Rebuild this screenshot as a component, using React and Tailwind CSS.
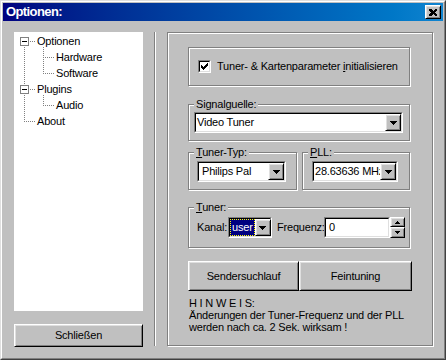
import React from "react";

const raised =
  "border border-t-white border-l-white border-r-black border-b-black shadow-[inset_1px_1px_0_#dfdfdf,inset_-1px_-1px_0_#808080]";
const etched = "border border-[#808080] shadow-[inset_1px_1px_0_#fff,1px_1px_0_#fff]";

function dotsH(x1, x2, y) {
  const out = [];
  for (let x = x1; x <= x2; x += 2) out.push(<rect key={`h${x}-${y}`} x={x} y={y} width="1" height="1" />);
  return out;
}
function dotsV(x, y1, y2) {
  const out = [];
  for (let y = y1; y <= y2; y += 2) out.push(<rect key={`v${x}-${y}`} x={x} y={y} width="1" height="1" />);
  return out;
}

function TreeLines() {
  return (
    <svg className="absolute left-0 top-0" width="129" height="120" shapeRendering="crispEdges">
      <g fill="#808080">
        {dotsH(16, 21, 9)}
        {dotsV(10, 15, 51)}
        {dotsV(10, 63, 89)}
        {dotsH(12, 21, 89)}
        {dotsH(16, 21, 57)}
        {dotsV(29, 15, 41)}
        {dotsH(31, 39, 25)}
        {dotsH(31, 39, 41)}
        {dotsV(29, 63, 73)}
        {dotsH(31, 39, 73)}
      </g>
      {[5, 53].map((y) => (
        <g key={y}>
          <rect x="6.5" y={y + 0.5} width="8" height="8" fill="#fff" stroke="#808080" />
          <rect x="8" y={y + 4} width="5" height="1" fill="#000" />
        </g>
      ))}
    </svg>
  );
}

function Arrow() {
  return (
    <svg width="7" height="4" shapeRendering="crispEdges">
      <polygon points="0,0 7,0 3.5,4" fill="#000" />
    </svg>
  );
}

function DropBtn() {
  return (
    <div className={`flex h-[17px] w-[16px] shrink-0 items-center justify-center bg-[#c0c0c0] ${raised}`}>
      <Arrow />
    </div>
  );
}

function Sunken({ className, children }) {
  return (
    <div className={`flex h-[21px] border border-t-[#808080] border-l-[#808080] border-r-white border-b-white ${className}`}>
      <div className="flex min-w-0 flex-1 border border-t-black border-l-black border-r-[#dfdfdf] border-b-[#dfdfdf] bg-white">
        {children}
      </div>
    </div>
  );
}

function Combo({ className, text, pad }) {
  return (
    <Sunken className={className}>
      <div className={`min-w-0 flex-1 overflow-hidden whitespace-nowrap leading-[17px] ${pad}`}>{text}</div>
      <DropBtn />
    </Sunken>
  );
}

function GroupLabel({ children }) {
  return (
    <span className="absolute left-[5px] top-[-7px] bg-[#c0c0c0] px-[2px] leading-[12px]">{children}</span>
  );
}

function Check() {
  return (
    <div className="flex h-[13px] w-[13px] border border-t-[#808080] border-l-[#808080] border-r-white border-b-white">
      <div className="flex flex-1 items-center justify-center border border-t-black border-l-black border-r-[#dfdfdf] border-b-[#dfdfdf] bg-white">
        <svg width="7" height="7" shapeRendering="crispEdges">
          <path d="M6 0h1v3h-1zM5 1h1v3h-1zM4 2h1v3h-1zM3 3h1v3h-1zM2 4h1v3h-1zM1 3h1v3h-1zM0 2h1v3h-1z" fill="#000" />
        </svg>
      </div>
    </div>
  );
}

export default function App() {
  return (
    <div className="h-[360px] w-[446px] border border-t-[#dfdfdf] border-l-[#dfdfdf] border-r-[#404040] border-b-[#404040] bg-[#c0c0c0] font-['Liberation_Sans',Arial,sans-serif] text-[11px] tracking-[-0.2px] text-black">
      <div className="flex h-full flex-col border border-t-white border-l-white border-r-[#808080] border-b-[#808080] p-px">
        <div className="flex h-[18px] shrink-0 items-center justify-between bg-linear-to-r from-[#000080] to-[#1084d0] pl-[3px] pr-[2px]">
          <span className="text-[13px] font-bold leading-[18px] tracking-[-0.6px] text-white">Optionen:</span>
          <div className={`flex h-[14px] w-[16px] items-center justify-center bg-[#c0c0c0] ${raised}`}>
            <svg width="8" height="7" shapeRendering="crispEdges">
              <path d="M0 0h2l2 2 2-2h2v1l-2 2.5 2 2.5v1h-2l-2-2-2 2h-2v-1l2-2.5-2-2.5z" fill="#000" />
            </svg>
          </div>
        </div>

        <div className="flex pl-[11px] pt-[11px]">
          <div className="flex w-[129px] flex-col">
            <div className="relative h-[279px] bg-white pt-[1px]">
              <TreeLines />
              <div className="relative leading-[16px]">
                <div className="h-[16px] pl-[23px]">Optionen</div>
                <div className="h-[16px] pl-[42px]">Hardware</div>
                <div className="h-[16px] pl-[42px]">Software</div>
                <div className="h-[16px] pl-[23px]">Plugins</div>
                <div className="h-[16px] pl-[42px]">Audio</div>
                <div className="h-[16px] pl-[23px]">About</div>
              </div>
            </div>
            <div className={`mt-[13px] flex h-[23px] items-center justify-center ${raised}`}>Schließen</div>
          </div>

          <div className="ml-[11px] h-[314px] w-[2px] border-l border-r border-l-[#808080] border-r-white" />

          <div className={`ml-[11px] flex h-[314px] w-[266px] flex-col pl-[20px] pt-[14px] ${etched}`}>
            <div className={`flex h-[39px] w-[222px] items-center pl-[9px] ${etched}`}>
              <Check />
              <span className="ml-[6px]">
                Tuner- &amp; Kartenparameter <u>i</u>nitialisieren
              </span>
            </div>

            <div className={`relative mt-[18px] h-[37px] w-[222px] pl-[5px] pt-[7px] ${etched}`}>
              <GroupLabel>Signalguelle:</GroupLabel>
              <Combo className="w-[209px]" text="Video Tuner" pad="pl-[1px]" />
            </div>

            <div className="mt-[11px] flex w-[222px] gap-[5px]">
              <div className={`relative h-[38px] w-[109px] pl-[8px] pt-[8px] ${etched}`}>
                <GroupLabel>
                  <u>T</u>uner-Typ:
                </GroupLabel>
                <Combo className="w-[89px]" text="Philips Pal" pad="pl-[3px]" />
              </div>
              <div className={`relative h-[38px] w-[108px] pl-[9px] pt-[8px] ${etched}`}>
                <GroupLabel>
                  <u>P</u>LL:
                </GroupLabel>
                <Combo className="w-[86px]" text="28.63636 MHz" pad="pl-[1px]" />
              </div>
            </div>

            <div className={`relative mt-[17px] h-[41px] w-[222px] pl-[8px] pt-[9px] ${etched}`}>
              <GroupLabel>
                <u>T</u>uner:
              </GroupLabel>
              <div className="flex items-center">
                <span className="w-[31px] whitespace-nowrap">Kanal:</span>
                <Sunken className="w-[44px]">
                  <div className="flex flex-1 items-stretch">
                    <span className="border border-dotted border-[#ffff00] bg-[#000080] px-[1px] leading-[15px] text-white">user</span>
                  </div>
                  <DropBtn />
                </Sunken>
                <span className="ml-[5px] w-[47px] whitespace-nowrap">Frequenz:</span>
                <Sunken className="w-[66px]">
                  <span className="pl-[3px] leading-[17px]">0</span>
                </Sunken>
                <div className="flex h-[21px] w-[15px] flex-col">
                  <div className={`flex h-[10px] items-center justify-center ${raised}`}>
                    <svg width="5" height="3" shapeRendering="crispEdges">
                      <polygon points="2.5,0 5,3 0,3" fill="#000" />
                    </svg>
                  </div>
                  <div className={`flex h-[11px] items-center justify-center ${raised}`}>
                    <svg width="5" height="3" shapeRendering="crispEdges">
                      <polygon points="0,0 5,0 2.5,3" fill="#000" />
                    </svg>
                  </div>
                </div>
              </div>
            </div>

            <div className="mt-[13px] flex h-[30px] w-[224px]">
              <div className={`flex w-[111px] items-center justify-center ${raised}`}>Sendersuchlauf</div>
              <div className={`flex w-[113px] items-center justify-center ${raised}`}>Feintuning</div>
            </div>

            <div className="mt-[6px] pl-[1px] leading-[12px]">
              <div>H I N W E I S:</div>
              <div>Änderungen der Tuner-Frequenz und der PLL</div>
              <div>werden nach ca. 2 Sek. wirksam !</div>
            </div>
          </div>
        </div>
      </div>
    </div>
  );
}
